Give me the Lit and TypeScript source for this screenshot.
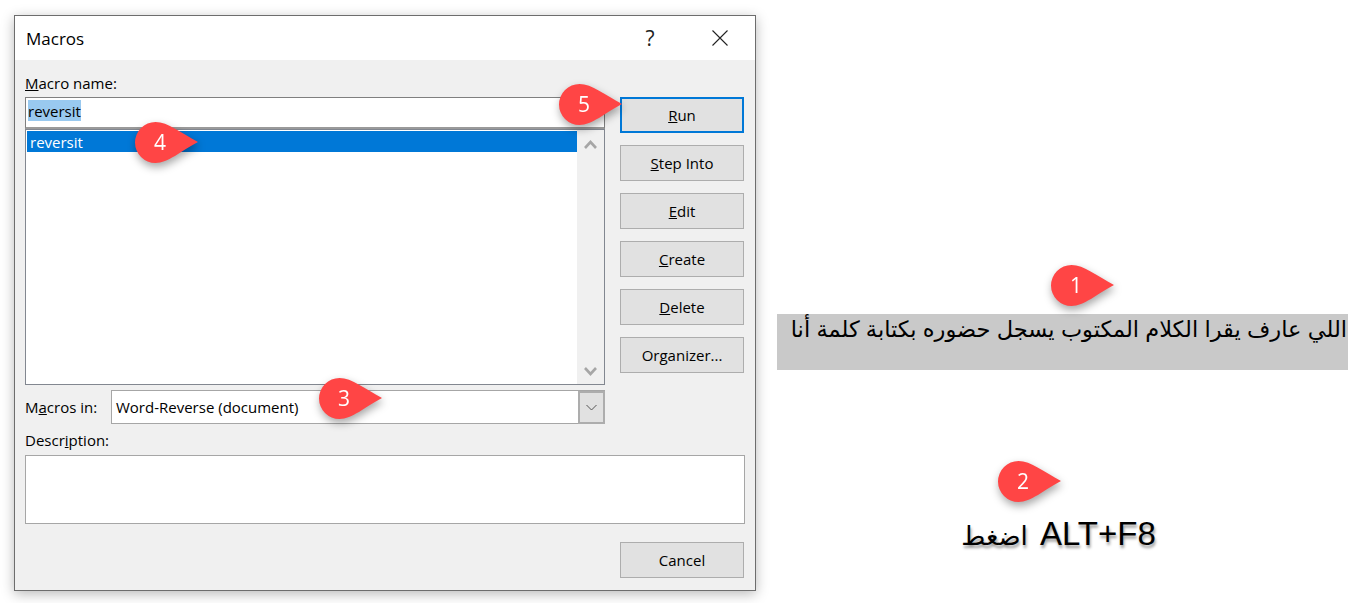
import { LitElement, html, css, svg } from 'lit';
import { customElement } from 'lit/decorators.js';

type Pin = { n: number; x: number; y: number };

const PINS: Pin[] = [
    { n: 1, x: 1051, y: 265 },
    { n: 2, x: 998, y: 461 },
    { n: 3, x: 319, y: 378 },
    { n: 4, x: 135, y: 122 },
    { n: 5, x: 559, y: 84 },
];

const chevron = (up: boolean) => svg`
    <svg class="chev" width="13" height="9" viewBox="0 0 13 9">
        <path d=${up ? 'M1 8 L6.5 2 L12 8' : 'M1 1 L6.5 7 L12 1'} fill="none" stroke="#a6a6a6" stroke-width="2.6"></path>
    </svg>`;

@customElement('app-root')
export class AppRoot extends LitElement {
    static styles = css`
        :host {
            display: flex;
            position: relative;
            width: 1362px;
            height: 603px;
            overflow: hidden;
            box-sizing: border-box;
            padding: 15px 0 0 14px;
            background: #fff;
            color: #000;
            font-family: 'Open Sans', 'Noto Sans', sans-serif;
            font-size: 15px;
        }

        .dialog {
            width: 742px;
            height: 576px;
            flex: none;
            box-sizing: border-box;
            border: 1px solid #6d6d6d;
            background: #f0f0f0;
            box-shadow: 0 3px 12px rgba(0, 0, 0, 0.28);
            display: flex;
            flex-direction: column;
        }

        .titlebar {
            height: 44px;
            flex: none;
            background: #fff;
            display: flex;
            align-items: center;
            padding-left: 11px;
            font-size: 17px;
        }

        .title {
            flex: 1;
        }

        .help {
            width: 20px;
            margin-right: 52px;
            text-align: center;
            font-size: 21px;
            color: #222;
        }

        .close {
            margin-right: 27px;
            display: block;
        }

        .content {
            padding: 14px 10px 0;
        }

        .top {
            display: flex;
            gap: 15px;
        }

        .left {
            width: 580px;
        }

        label {
            display: block;
            height: 23px;
            line-height: 19px;
        }

        .name {
            height: 32px;
            box-sizing: border-box;
            border: 1px solid #7f7f7f;
            border-bottom: 2px solid #9a9a9a;
            background: #fff;
            padding: 2px 0 0 2px;
        }

        .name span {
            display: inline-block;
            height: 21px;
            line-height: 22px;
            background: #99c9ef;
        }

        .list {
            height: 256px;
            box-sizing: border-box;
            border: 1px solid #828790;
            background: #fff;
            display: flex;
        }

        .items {
            flex: 1;
            padding: 1px 0 0 1px;
        }

        .item {
            height: 21px;
            line-height: 22px;
            padding-left: 3px;
            background: #0078d7;
            color: #fff;
        }

        .scroll {
            width: 27px;
            flex: none;
            background: #f0f0f0;
            display: flex;
            flex-direction: column;
            justify-content: space-between;
            align-items: center;
            padding: 10px 0 8px;
            box-sizing: border-box;
        }

        .chev {
            display: block;
        }

        .macros-in {
            display: flex;
            align-items: center;
            height: 34px;
            margin-top: 5px;
        }

        .macros-in span.lbl {
            width: 86px;
            flex: none;
        }

        .select {
            flex: 1;
            height: 34px;
            box-sizing: border-box;
            border: 1px solid #a6a6a6;
            background: #fff;
            display: flex;
            align-items: center;
            padding-left: 4px;
        }

        .select .value {
            flex: 1;
        }

        .drop {
            width: 27px;
            height: 33px;
            box-sizing: border-box;
            border: 2px solid #adadad;
            background: #e1e1e1;
            display: flex;
            align-items: center;
            justify-content: center;
            margin-right: -1px;
        }

        .buttons {
            width: 124px;
            margin-top: 23px;
            display: flex;
            flex-direction: column;
            gap: 12px;
        }

        .btn {
            width: 124px;
            height: 36px;
            box-sizing: border-box;
            border: 1px solid #adadad;
            background: #e1e1e1;
            display: flex;
            align-items: center;
            justify-content: center;
        }

        .btn.default {
            border: 2px solid #0078d7;
        }

        .desc-label {
            height: 25px;
            margin-top: 6px;
            line-height: 20px;
        }

        .desc {
            width: 720px;
            height: 69px;
            box-sizing: border-box;
            border: 1px solid #a6a6a6;
            background: #fff;
        }

        .bottom {
            display: flex;
            justify-content: flex-end;
            margin: 18px 1px 0 0;
        }

        .side {
            width: 571px;
            margin-left: 21px;
            padding-top: 299px;
            font-family: 'Liberation Sans', 'DejaVu Sans', sans-serif;
        }

        .band {
            height: 56px;
            box-sizing: border-box;
            background: #c9c9c9;
            font-size: 22.5px;
            line-height: 32px;
            padding: 0 1px 0 0;
            white-space: nowrap;
            overflow: hidden;
        }

        .shortcut {
            margin-top: 144px;
            padding-right: 8px;
            text-align: center;
            font-size: 33px;
            line-height: 40px;
            text-shadow: 1px 3px 3px rgba(0, 0, 0, 0.4);
            white-space: nowrap;
        }

        .shortcut span {
            font-size: 26px;
            margin-right: 3px;
        }

        .pin {
            position: absolute;
            width: 63px;
            height: 41px;
            filter: drop-shadow(1px 4px 4px rgba(0, 0, 0, 0.35));
        }

        .pin svg {
            display: block;
        }

        .pin span {
            position: absolute;
            left: 0;
            top: 0;
            width: 50px;
            height: 41px;
            line-height: 40px;
            text-align: center;
            color: #fff;
            font-size: 21px;
        }
    `;

    render() {
        return html`
            <div class="dialog">
                <div class="titlebar">
                    <div class="title">Macros</div>
                    <div class="help">?</div>
                    <svg class="close" width="16" height="16" viewBox="0 0 16 16">
                        <path d="M0.5 0.5 L15.5 15.5 M15.5 0.5 L0.5 15.5" stroke="#222" stroke-width="1.1" fill="none"></path>
                    </svg>
                </div>
                <div class="content">
                    <div class="top">
                        <div class="left">
                            <label><u>M</u>acro name:</label>
                            <div class="name"><span>reversit</span></div>
                            <div class="list">
                                <div class="items"><div class="item">reversit</div></div>
                                <div class="scroll">${chevron(true)}${chevron(false)}</div>
                            </div>
                            <div class="macros-in">
                                <span class="lbl">M<u>a</u>cros in:</span>
                                <div class="select">
                                    <span class="value">Word-Reverse (document)</span>
                                    <div class="drop">
                                        <svg width="11" height="7" viewBox="0 0 11 7">
                                            <path d="M0.5 1 L5.5 6 L10.5 1" fill="none" stroke="#555" stroke-width="1"></path>
                                        </svg>
                                    </div>
                                </div>
                            </div>
                        </div>
                        <div class="buttons">
                            <div class="btn default"><span><u>R</u>un</span></div>
                            <div class="btn"><span><u>S</u>tep Into</span></div>
                            <div class="btn"><span><u>E</u>dit</span></div>
                            <div class="btn"><span><u>C</u>reate</span></div>
                            <div class="btn"><span><u>D</u>elete</span></div>
                            <div class="btn"><span>Or<u>g</u>anizer...</span></div>
                        </div>
                    </div>
                    <div class="desc-label">Descr<u>i</u>ption:</div>
                    <div class="desc"></div>
                    <div class="bottom"><div class="btn">Cancel</div></div>
                </div>
            </div>
            <div class="side">
                <div class="band" dir="rtl">اللي عارف يقرا الكلام المكتوب يسجل حضوره بكتابة كلمة أنا</div>
                <div class="shortcut" dir="rtl">ALT+F8 <span>اضغط</span></div>
            </div>
            ${PINS.map(
                p => html`
                    <div class="pin" style="left:${p.x}px;top:${p.y}px">
                        <svg width="63" height="41" viewBox="0 0 63 41">
                            <path d="M20.5 0 C33 0 46 11 63 20 C46 29 33 41 20.5 41 A20.5 20.5 0 0 1 20.5 0 Z" fill="#ff4545"></path>
                        </svg>
                        <span>${p.n}</span>
                    </div>
                `
            )}
        `;
    }
}
